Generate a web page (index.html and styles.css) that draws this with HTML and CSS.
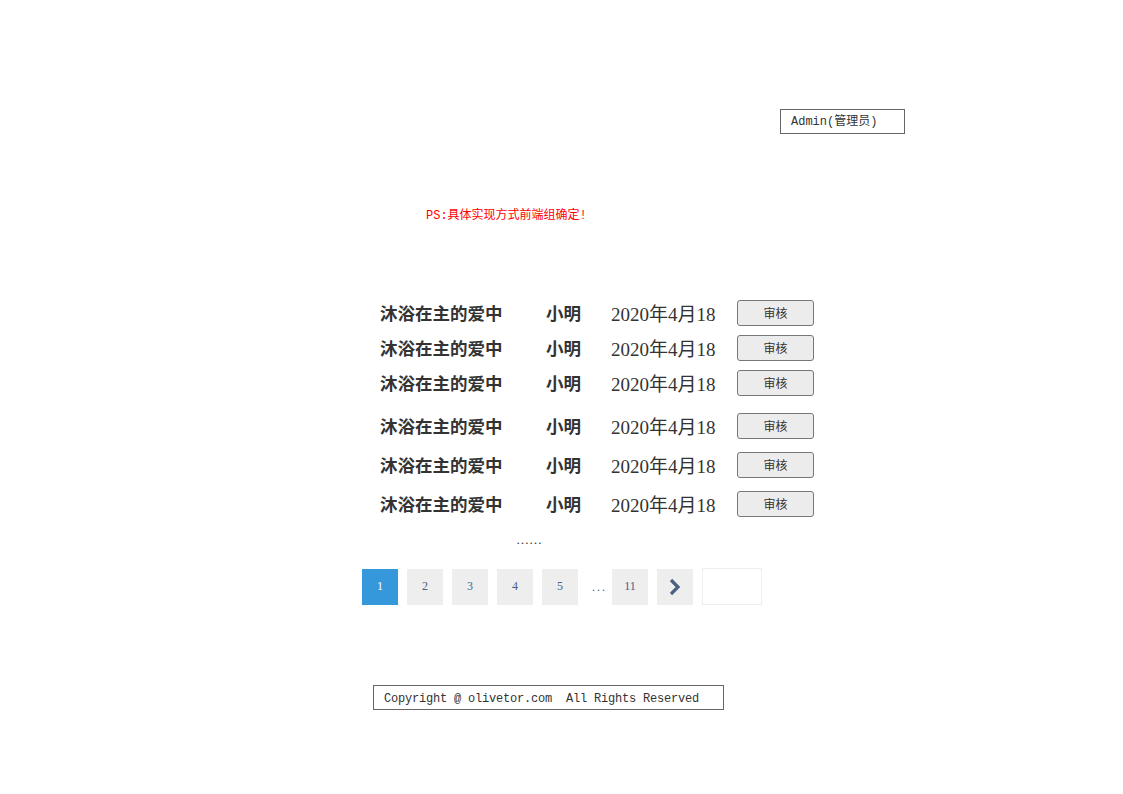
FILE: index.html
```html
<!DOCTYPE html>
<html lang="zh-CN">
<head>
  <meta charset="UTF-8" />
  <title>审核列表</title>
  <link rel="stylesheet" href="styles.css">
</head>
<body>
  <div class="page">
    <div class="top-bar">
      <div class="user-box">Admin(管理员)</div>
    </div>

    <p class="note">PS:具体实现方式前端组确定!</p>

    <div class="list">
      <div class="group">
        <div class="row"><span class="title">沐浴在主的爱中</span><span class="name">小明</span><span class="date">2020年4月18</span><button class="btn">审核</button></div>
        <div class="row"><span class="title">沐浴在主的爱中</span><span class="name">小明</span><span class="date">2020年4月18</span><button class="btn">审核</button></div>
        <div class="row"><span class="title">沐浴在主的爱中</span><span class="name">小明</span><span class="date">2020年4月18</span><button class="btn">审核</button></div>
      </div>
      <div class="group group-wide">
        <div class="row"><span class="title">沐浴在主的爱中</span><span class="name">小明</span><span class="date">2020年4月18</span><button class="btn">审核</button></div>
        <div class="row"><span class="title">沐浴在主的爱中</span><span class="name">小明</span><span class="date">2020年4月18</span><button class="btn">审核</button></div>
        <div class="row"><span class="title">沐浴在主的爱中</span><span class="name">小明</span><span class="date">2020年4月18</span><button class="btn">审核</button></div>
      </div>
      <div class="more">……</div>
    </div>

    <div class="pager">
      <a class="page-item active">1</a>
      <a class="page-item">2</a>
      <a class="page-item">3</a>
      <a class="page-item">4</a>
      <a class="page-item">5</a>
      <span class="page-dots">...</span>
      <a class="page-item">11</a>
      <a class="page-item page-next">
        <svg width="14" height="18" viewBox="0 0 14 18"><path d="M3 2 L10 9 L3 16" fill="none" stroke="#4a6184" stroke-width="3.2"/></svg>
      </a>
      <input class="page-input" type="text">
    </div>

    <div class="footer">
      <div class="copyright">Copyright @ olivetor.com&nbsp; All Rights Reserved</div>
    </div>
  </div>
</body>
</html>
```

FILE: styles.css
```css
body {
  margin: 0;
  background: #fff;
  font-family: "Liberation Serif", "Noto Sans CJK SC", serif;
  color: #333;
}
.page {
  width: 1123px;
  height: 794px;
  overflow: hidden;
}
.top-bar {
  display: flex;
  justify-content: flex-end;
  padding: 109px 218px 0 0;
}
.user-box {
  box-sizing: border-box;
  width: 125px;
  height: 25px;
  border: 1px solid #666;
  padding: 1px 0 0 10px;
  font-family: "Liberation Mono", "Noto Sans CJK SC", monospace;
  font-size: 12px;
  line-height: 23px;
  color: #333;
}
.note {
  margin: 74px 0 0 426px;
  font-family: "Liberation Mono", "Noto Sans CJK SC", monospace;
  font-size: 12px;
  line-height: 16px;
  color: #ff0000;
}
.list {
  margin-top: 75px;
  padding-left: 380px;
}
.group {
  display: flex;
  flex-direction: column;
  gap: 9px;
}
.group-wide {
  margin-top: 17px;
  gap: 13px;
}
.row {
  display: grid;
  grid-template-columns: 166px 65px 126px 77px;
  align-items: center;
  height: 26px;
  font-size: 17.5px;
  font-weight: bold;
  color: #333;
}
.date {
  font-weight: normal;
  font-size: 19px;
  color: #333;
}
.btn {
  box-sizing: border-box;
  width: 77px;
  height: 26px;
  padding: 0;
  border: 1px solid #777;
  border-radius: 3px;
  background: #ececec;
  font-family: "Noto Sans CJK SC", sans-serif;
  font-size: 12px;
  color: #333;
}
.more {
  margin: 15px 0 0 136px;
  font-size: 13px;
  line-height: 18px;
  color: #333;
}
.pager {
  display: flex;
  align-items: center;
  margin: 19px 0 0 362px;
}
.page-item {
  width: 36px;
  height: 36px;
  margin-right: 9px;
  display: flex;
  align-items: center;
  justify-content: center;
  background: #eee;
  font-size: 12px;
  color: #4a6184;
}
.page-item.active {
  background: #3498db;
  color: #fff;
}
.page-dots {
  width: 25px;
  text-align: center;
  font-size: 12px;
  letter-spacing: 2px;
  color: #4a6184;
  padding-top: 2px;
}
.page-input {
  box-sizing: border-box;
  width: 60px;
  height: 37px;
  border: 1px solid #eee;
  outline: none;
}
.footer {
  margin: 80px 0 0 373px;
}
.copyright {
  box-sizing: border-box;
  width: 351px;
  height: 25px;
  border: 1px solid #666;
  padding: 1px 0 0 10px;
  font-family: "Liberation Mono", monospace;
  font-size: 12px;
  letter-spacing: -0.2px;
  line-height: 24px;
  color: #333;
}
```
